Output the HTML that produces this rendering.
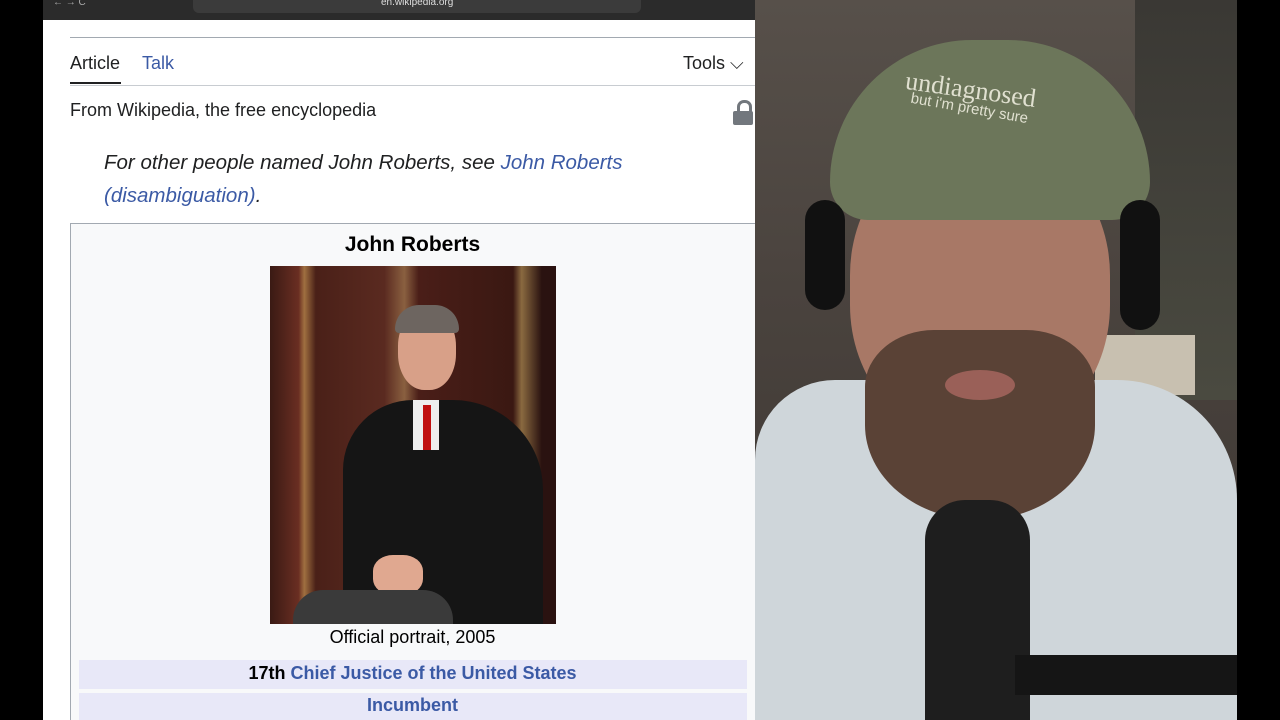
<!DOCTYPE html>
<html><head><style>
body{margin:0;width:1280px;height:720px;background:#000;overflow:hidden;position:relative;font-family:"Liberation Sans",sans-serif}
.a{position:absolute}
#wiki{left:43px;top:0;width:712px;height:720px;background:#fff;overflow:hidden}
#cam{left:755px;top:0;width:482px;height:720px;background:linear-gradient(180deg,#57504a 0%,#4a433e 40%,#3a3430 100%);overflow:hidden}
.blue{color:#3b5aa5}
</style></head><body>
<div id="wiki" class="a">
 <div class="a" style="left:80px;top:-14px;font-family:'Liberation Serif',serif;font-size:32px;color:#222">John Roberts</div>
 <div class="a" style="left:0;top:0;width:712px;height:20px;background:#2b2b2b"></div>
 <div class="a" style="left:150px;top:0;width:448px;height:13px;background:#3b3b3b;border-radius:0 0 6px 6px"></div>
 <div class="a" style="left:338px;top:-3px;font-size:10px;color:#ddd">en.wikipedia.org</div>
 <div class="a" style="left:10px;top:-3px;font-size:10px;color:#aaa">←  →  C</div>
 <div class="a" style="left:27px;top:37px;width:685px;height:1px;background:#a2a9b1"></div>
 <div class="a" style="left:27px;top:53px;font-size:18px;color:#202122">Article</div>
 <div class="a" style="left:27px;top:82px;width:51px;height:2px;background:#202122"></div>
 <div class="a blue" style="left:99px;top:53px;font-size:18px">Talk</div>
 <div class="a" style="left:640px;top:53px;font-size:18px;color:#202122">Tools ⌵</div>
 <div class="a" style="left:27px;top:85px;width:685px;height:1px;background:#c8ccd1"></div>
 <div class="a" style="left:27px;top:100px;font-size:18px;color:#202122">From Wikipedia, the free encyclopedia</div>
 <div class="a" style="left:690px;top:100px;width:20px;height:25px;"><div class="a" style="left:4px;top:0;width:9px;height:10px;border:3px solid #72777d;border-bottom:none;border-radius:7px 7px 0 0"></div><div class="a" style="left:0;top:11px;width:20px;height:14px;background:#72777d;border-radius:2px"></div></div>
 <div class="a" style="left:61px;top:146px;font-size:20.5px;font-style:italic;color:#202122;line-height:33px;width:600px">For other people named John Roberts, see <span class="blue">John Roberts (disambiguation)</span>.</div>
 <div class="a" style="left:27px;top:223px;width:690px;height:510px;background:#f8f9fa;border:1px solid #a2a9b1"></div>
 <div class="a" style="left:27px;top:233px;width:685px;text-align:center;font-size:21px;font-weight:bold;color:#000">John Roberts</div>
 <div class="a" style="left:227px;top:266px;width:286px;height:358px;background:linear-gradient(90deg,#3a1a14 0%,#6a2e22 10%,#a07040 12%,#4a2018 16%,#5a2a20 40%,#8a6040 47%,#4a1e18 52%,#3a1812 85%,#8a6a40 88%,#2a1210 95%)"></div>
 <div class="a" style="left:300px;top:400px;width:200px;height:224px;background:#151515;border-radius:70px 90px 0 0"></div>
 <div class="a" style="left:355px;top:310px;width:58px;height:80px;background:#d8a088;border-radius:45%"></div>
 <div class="a" style="left:352px;top:305px;width:64px;height:28px;background:#6d6560;border-radius:30px 30px 5px 5px"></div>
 <div class="a" style="left:370px;top:400px;width:26px;height:50px;background:#eee"></div>
 <div class="a" style="left:380px;top:405px;width:8px;height:45px;background:#c01010"></div>
 <div class="a" style="left:330px;top:555px;width:50px;height:40px;background:#e0a890;border-radius:40%"></div>
 <div class="a" style="left:250px;top:590px;width:160px;height:34px;background:#3a3a3a;border-radius:30px 30px 0 0"></div>
 <div class="a" style="left:27px;top:627px;width:685px;text-align:center;font-size:18px;color:#000">Official portrait, 2005</div>
 <div class="a" style="left:36px;top:660px;width:668px;height:29px;background:#e8e8f8"></div>
 <div class="a" style="left:27px;top:663px;width:685px;text-align:center;font-size:18px;font-weight:bold;color:#000">17th <span class="blue">Chief Justice of the United States</span></div>
 <div class="a" style="left:36px;top:693px;width:668px;height:29px;background:#e8e8f8"></div>
 <div class="a blue" style="left:27px;top:695px;width:685px;text-align:center;font-size:18px;font-weight:bold">Incumbent</div>
</div>
<div id="cam" class="a">
 <div class="a" style="left:380px;top:0;width:102px;height:400px;background:linear-gradient(180deg,#3a3834,#4a4a40)"></div>
 <div class="a" style="left:340px;top:335px;width:100px;height:60px;background:#c8c0b0"></div>
 <div class="a" style="left:0;top:380px;width:482px;height:340px;background:#cfd6da;border-radius:80px 120px 0 0"></div>
 <div class="a" style="left:95px;top:140px;width:260px;height:300px;background:#a87866;border-radius:45%"></div>
 <div class="a" style="left:110px;top:330px;width:230px;height:190px;background:#5a4236;border-radius:30% 30% 50% 50%"></div>
 <div class="a" style="left:190px;top:370px;width:70px;height:30px;background:#9a6058;border-radius:50%"></div>
 <div class="a" style="left:75px;top:40px;width:320px;height:180px;background:#6c765a;border-radius:150px 150px 40px 40px"></div>
 <div class="a" style="left:150px;top:75px;font-family:'Liberation Serif',serif;font-size:26px;color:#e0e0d0;transform:rotate(8deg)">undiagnosed</div>
 <div class="a" style="left:155px;top:100px;font-size:15px;color:#e0e0d0;transform:rotate(10deg)">but i'm pretty sure</div>
 <div class="a" style="left:50px;top:200px;width:40px;height:110px;background:#111;border-radius:20px"></div>
 <div class="a" style="left:365px;top:200px;width:40px;height:130px;background:#111;border-radius:20px"></div>
 <div class="a" style="left:170px;top:500px;width:105px;height:220px;background:#1e1e1e;border-radius:40px 40px 0 0"></div>
 <div class="a" style="left:260px;top:655px;width:222px;height:40px;background:#151515"></div>
</div>
</body></html>
